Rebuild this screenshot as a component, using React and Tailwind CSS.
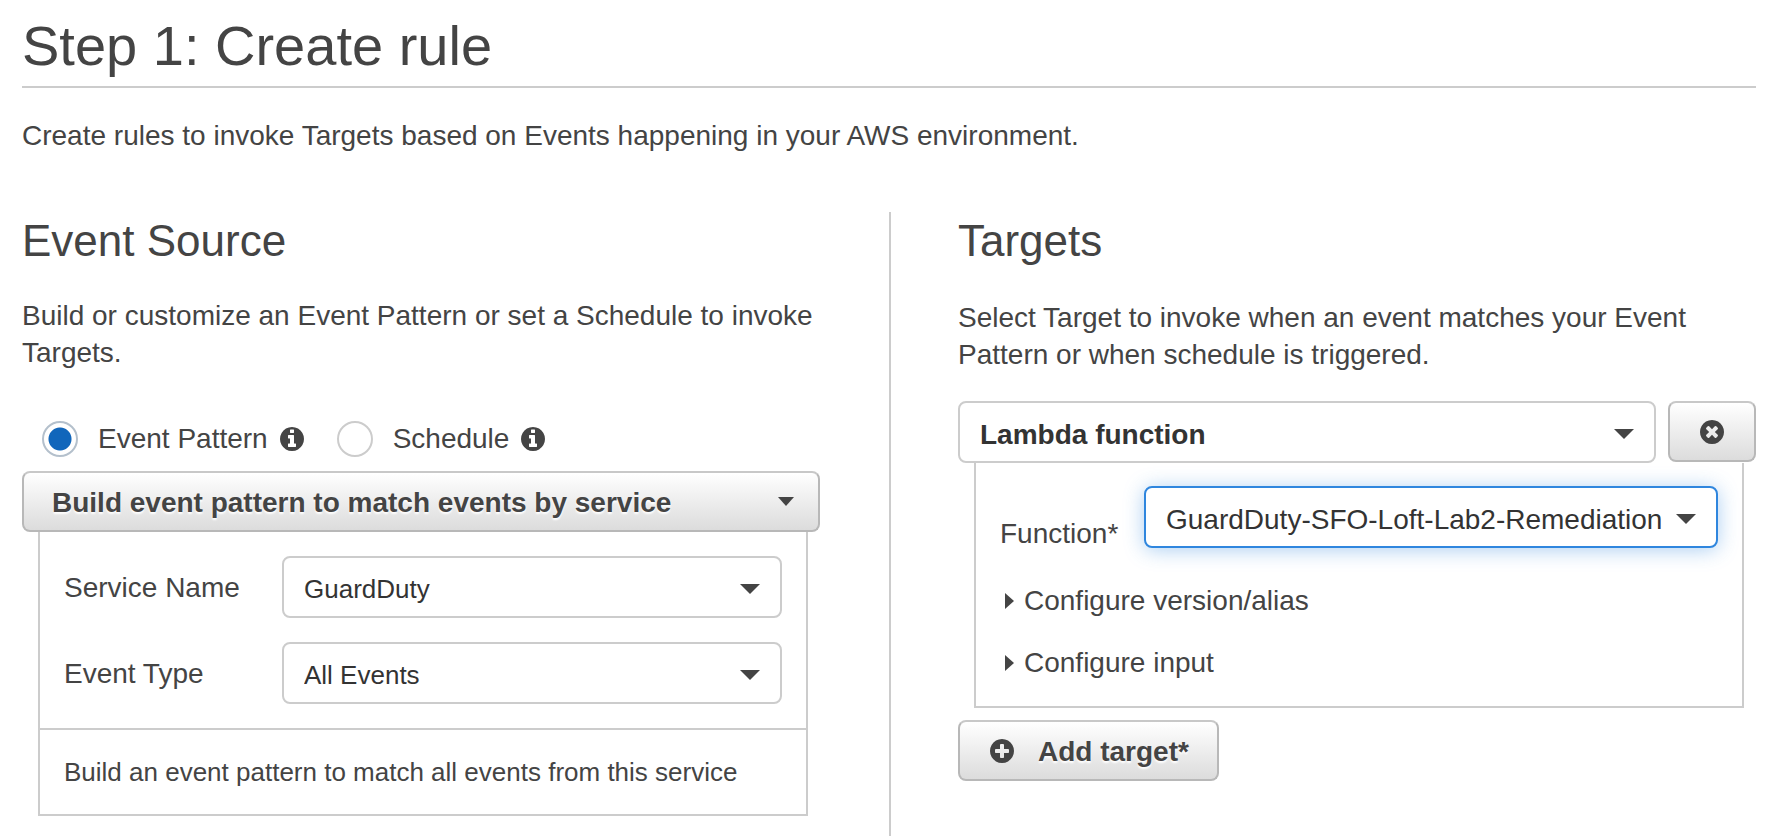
import React from "react";

const CIRCLE =
  "M1664 896q0 209-103 385.5t-279.5 279.5-385.5 103-385.5-103-279.5-279.5-103-385.5 103-385.5 279.5-279.5 385.5-103 385.5 103 279.5 279.5 103 385.5z";
const GLYPHS = {
  info: "M1152 1376v-160q0-14-9-23t-23-9h-96v-512q0-14-9-23t-23-9h-320q-14 0-23 9t-9 23v160q0 14 9 23t23 9h96v320h-96q-14 0-23 9t-9 23v160q0 14 9 23t23 9h448q14 0 23-9t9-23zM1024 480v-160q0-14-9-23t-23-9h-192q-14 0-23 9t-9 23v160q0 14 9 23t23 9h192q14 0 23-9t9-23z",
  times:
    "M1277 1122q0-26-19-45l-181-181 181-181q19-19 19-45 0-27-19-46l-90-90q-19-19-46-19-26 0-45 19l-181 181-181-181q-19-19-45-19-27 0-46 19l-90 90q-19 19-19 46 0 26 19 45l181 181-181 181q-19 19-19 45 0 27 19 46l90 90q19 19 46 19 26 0 45-19l181-181 181 181q19 19 45 19 27 0 46-19l90-90q19-19 19-46z",
  plus: "M1344 960v-128q0-26-19-45t-45-19h-256v-256q0-26-19-45t-45-19h-128q-26 0-45 19t-19 45v256h-256q-26 0-45 19t-19 45v128q0 26 19 45t45 19h256v256q0 26 19 45t45 19h128q26 0 45-19t19-45v-256h256q26 0 45-19t19-45z",
};

function CircleIcon({ glyph }) {
  return (
    <svg viewBox="128 128 1536 1536" className="size-6 shrink-0 fill-[#444]" aria-hidden="true">
      <path fillRule="evenodd" d={GLYPHS[glyph] + CIRCLE} />
    </svg>
  );
}

const buttonLook =
  "rounded-lg border-2 border-[#b8b8b8] border-t-[#c8c8c8] bg-linear-to-b from-white to-[#dcdcdc] font-bold text-[#444] text-shadow-[0_2px_2px_white]";

function Select({ id, label, options, look = "border-[#ccc] text-[26px]" }) {
  return (
    <div className="relative min-w-0 flex-1">
      <select
        id={id}
        aria-label={label}
        className={`h-[62px] w-full appearance-none rounded-lg border-2 bg-white pt-1 pr-11 pl-5 text-[#333] outline-none ${look}`}
      >
        {options.map((o) => (
          <option key={o}>{o}</option>
        ))}
      </select>
      <svg
        viewBox="0 0 20 10"
        className="pointer-events-none absolute top-7 right-[22px] h-2.5 w-5 fill-[#444]"
        aria-hidden="true"
      >
        <path d="M0 0h20L10 10z" />
      </svg>
    </div>
  );
}

function Radio({ id, label, checked }) {
  return (
    <div className="flex items-center">
      <input
        type="radio"
        id={id}
        name="source"
        defaultChecked={checked}
        className="size-9 appearance-none rounded-full border-2 border-[#ccc] bg-white checked:border-[#b4c0cc] checked:bg-[radial-gradient(circle,#1166bb_11px,white_12px)]"
      />
      <label htmlFor={id} className="mr-3 ml-5">
        {label}
      </label>
      <CircleIcon glyph="info" />
    </div>
  );
}

function Disclosure({ children }) {
  return (
    <button type="button" aria-expanded="false" className="flex items-center gap-2.5 pl-[5px]">
      <svg viewBox="0 0 9 16" className="h-4 w-[9px] fill-[#444]" aria-hidden="true">
        <path d="M0 0v16l9-8z" />
      </svg>
      {children}
    </button>
  );
}

export default function App() {
  return (
    <main className="flex min-h-screen flex-col bg-white pt-3.5 pr-3.5 pl-[22px] font-['Liberation_Sans',Arial,sans-serif] text-[28px] leading-[37px] text-[#444]">
      <h1 className="border-b-2 border-[#ccc] pb-2 text-[56px] leading-[64px]">Step 1: Create rule</h1>
      <p className="mt-[29px]">Create rules to invoke Targets based on Events happening in your AWS environment.</p>

      <div className="mt-[58px] flex flex-1">
        <section className="min-w-0 flex-1">
          <h2 className="text-[44px] leading-[58px]">Event Source</h2>
          <p className="mt-[27px]">Build or customize an Event Pattern or set a Schedule to invoke Targets.</p>

          <div className="mt-[49px] flex gap-[33px] pl-5">
            <Radio id="event-pattern" label="Event Pattern" checked />
            <Radio id="schedule" label="Schedule" />
          </div>

          <button
            type="button"
            className={`mt-3.5 flex h-[61px] w-full items-center justify-between pr-6 pl-7 ${buttonLook}`}
          >
            <span className="pt-0.5">Build event pattern to match events by service</span>
            <svg viewBox="0 0 16 9" className="h-[9px] w-4 fill-[#444]" aria-hidden="true">
              <path d="M0 0h16L8 9z" />
            </svg>
          </button>

          <div className="mr-3 ml-4 border-x-2 border-b-2 border-[#ccc]">
            <div className="flex flex-col gap-6 p-6">
              <div className="flex items-center">
                <label htmlFor="service" className="w-[218px]">
                  Service Name
                </label>
                <Select id="service" options={["GuardDuty"]} />
              </div>
              <div className="flex items-center">
                <label htmlFor="type" className="w-[218px]">
                  Event Type
                </label>
                <Select id="type" options={["All Events"]} />
              </div>
            </div>
            <p className="border-t-2 border-[#ccc] px-6 pt-6 pb-[23px] text-[26px]">
              Build an event pattern to match all events from this service
            </p>
          </div>
        </section>

        <section className="ml-[69px] min-w-0 flex-1 border-l-2 border-[#ccc] pl-[67px]">
          <h2 className="text-[44px] leading-[58px]">Targets</h2>
          <p className="mt-[29px]">
            Select Target to invoke when an event matches your Event Pattern or when schedule is triggered.
          </p>
          <div className="mt-7 flex gap-3">
            <Select
              id="target"
              label="Target type"
              options={["Lambda function"]}
              look="border-[#ccc] font-bold text-[28px]"
            />
            <button
              type="button"
              aria-label="Remove target"
              className={`flex h-[61px] w-[88px] items-center justify-center ${buttonLook}`}
            >
              <CircleIcon glyph="times" />
            </button>
          </div>

          <div className="mr-3 ml-4 flex flex-col items-start border-x-2 border-b-2 border-[#ccc] px-6 pt-[23px] pb-[25px]">
            <div className="flex w-full">
              <label htmlFor="function" className="w-36 pt-[29px]">
                Function*
              </label>
              <Select
                id="function"
                options={["GuardDuty-SFO-Loft-Lab2-Remediation"]}
                look="border-[#2f86de] text-[28px] shadow-[0_2px_20px_rgba(47,134,222,0.4)]"
              />
            </div>
            <div className="mt-[30px] flex flex-col items-start gap-[25px]">
              <Disclosure>Configure version/alias</Disclosure>
              <Disclosure>Configure input</Disclosure>
            </div>
          </div>

          <button type="button" className={`mt-3 flex h-[61px] items-center gap-6 pr-7 pl-[30px] ${buttonLook}`}>
            <CircleIcon glyph="plus" />
            <span className="pt-0.5">Add target*</span>
          </button>
        </section>
      </div>
    </main>
  );
}
